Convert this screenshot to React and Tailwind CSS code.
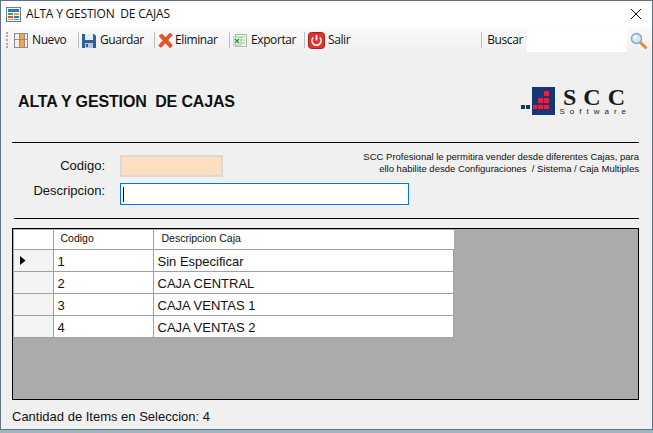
const sans = 'font-["Liberation_Sans",Arial,sans-serif]';

const NuevoIcon = () => (
  <svg width="14" height="15" viewBox="0 0 14 15">
    <rect x="0.500" y="0.500" width="13" height="14" fill="#f4f1ea" stroke="#8d8d8d" />
    <rect x="5" y="1" width="5" height="13" fill="#f5a24a" />
    <rect x="1" y="6" width="12" height="1" fill="#8d8d8d" />
    <rect x="5" y="1" width="1" height="13" fill="#8d8d8d" />
    <rect x="10" y="1" width="1" height="13" fill="#8d8d8d" />
  </svg>
);

const GuardarIcon = () => (
  <svg width="14" height="15" viewBox="0 0 14 15">
    <path d="M0 1h12l2 2v12H0z" fill="#2f5f9e" />
    <rect x="3" y="1" width="8" height="6" fill="#e8eef5" />
    <rect x="3" y="10" width="8" height="5" fill="#b9c6d6" />
    <rect x="4" y="11" width="2" height="3" fill="#2f5f9e" />
  </svg>
);

const EliminarIcon = () => (
  <svg width="15" height="15" viewBox="0 0 15 15">
    <path d="M1 3l3-2 3.500 3.500L12 0l2.500 2-4.500 5 4.500 5.500L12 15 7.500 10 3 14.500 .5 12.500 5 7.500z" fill="#e8542a" stroke="#c93f1c" strokeWidth="0.5" />
  </svg>
);

const ExportarIcon = () => (
  <svg width="14" height="15" viewBox="0 0 14 15">
    <rect x="2.500" y="1.500" width="11" height="12" fill="#eef4e8" stroke="#a3c49e" />
    <path d="M8 4h4M8 7h4M8 10h4" stroke="#a9c9a3" />
    <rect x="0" y="4" width="8" height="8" fill="#dfeed8" stroke="#86b07c" strokeWidth="0.6" />
    <path d="M2 6l4 4M6 6l-4 4" stroke="#3c8a40" strokeWidth="1.200" />
  </svg>
);

const SalirIcon = () => (
  <svg width="17" height="17" viewBox="0 0 17 17">
    <rect x="0.500" y="0.500" width="16" height="16" rx="3" fill="#e4302b" stroke="#a91f1b" />
    <path d="M5.300 5.500a4.500 4.500 0 1 0 6.400 0" fill="none" stroke="#fff" strokeWidth="1.700" />
    <path d="M8.500 3v5.500" stroke="#fff" strokeWidth="1.700" />
  </svg>
);

const AppIcon = () => (
  <svg width="15" height="15" viewBox="0 0 15 15">
    <rect x="0.500" y="0.500" width="14" height="14" fill="#fff" stroke="#6d7f95" />
    <rect x="2" y="2" width="11" height="3" fill="#2b78d0" />
    <rect x="2" y="6" width="5" height="2" fill="#3aa655" />
    <rect x="8" y="6" width="5" height="2" fill="#f0a030" />
    <rect x="2" y="9" width="5" height="2" fill="#e05040" />
    <rect x="8" y="9" width="5" height="2" fill="#2b78d0" />
    <rect x="2" y="12" width="5" height="1" fill="#f0a030" />
    <rect x="8" y="12" width="5" height="1" fill="#3aa655" />
  </svg>
);

const SearchIcon = () => (
  <svg width="17" height="17" viewBox="0 0 17 17">
    <path d="M10 10l5.500 5.500" stroke="#ee8a2c" strokeWidth="3" strokeLinecap="round" />
    <circle cx="6.500" cy="6.500" r="5" fill="#cfe6f5" stroke="#7fa8c4" strokeWidth="1.400" />
    <circle cx="5" cy="5" r="1.800" fill="#fff" />
  </svg>
);

const Logo = () => (
  <div className="flex items-start gap-[4px]">
    <svg width="34" height="28" viewBox="0 0 34 28">
      <rect x="0" y="18" width="4" height="4" fill="#14386f" />
      <rect x="5" y="18" width="4" height="4" fill="#14386f" />
      <rect x="11" y="0" width="23" height="28" fill="#14386f" />
      <rect x="23" y="4" width="5" height="5" fill="#ee1c3f" />
      <rect x="17" y="11" width="5" height="5" fill="#ee1c3f" />
      <rect x="23" y="11" width="5" height="5" fill="#ee1c3f" />
      <rect x="12" y="18" width="4" height="4" fill="#ee1c3f" />
      <rect x="17" y="18" width="5" height="4" fill="#ee1c3f" />
      <rect x="23" y="18" width="5" height="4" fill="#ee1c3f" />
    </svg>
    <div className="w-[67px] flex flex-col items-end">
      <span className='font-["Liberation_Serif",serif] font-bold text-[24px] leading-[20px] tracking-[7px] -mr-[6px] text-[#1b1b1b]'>SCC</span>
      <span className={`${sans} text-[8px] leading-[9px] tracking-[5px] -mr-[5px] text-[#222]`}>Software</span>
    </div>
  </div>
);

const tools = [
  { label: 'Nuevo', icon: <NuevoIcon />, width: 'w-[68px]', gap: 'gap-[4px]' },
  { label: 'Guardar', icon: <GuardarIcon />, width: 'w-[76px]', gap: 'gap-[4px]' },
  { label: 'Eliminar', icon: <EliminarIcon />, width: 'w-[75px]', gap: 'gap-[2px]' },
  { label: 'Exportar', icon: <ExportarIcon />, width: 'w-[75px]', gap: 'gap-[4px]' },
];

const rows = [
  ['1', 'Sin Especificar'],
  ['2', 'CAJA CENTRAL'],
  ['3', 'CAJA VENTAS 1'],
  ['4', 'CAJA VENTAS 2'],
];

export default function App() {
  return (
    <div className="w-[653px] h-[433px] overflow-hidden bg-[#9fb4bd]">
      <div className={`h-[430px] border border-[#5f7380] bg-[#f0f0f0] flex flex-col ${sans} text-[#111]`}>
        {/* title bar */}
        <div className="h-[26px] shrink-0 bg-white flex items-center pl-[5px] pr-[9px] font-['Open_Sans',sans-serif] text-[12px]">
          <AppIcon />
          <span className="ml-[5px] whitespace-pre tracking-[-0.200px]">ALTA Y GESTION  DE CAJAS</span>
          <svg width="14" height="14" viewBox="0 0 14 14" className="ml-auto">
            <path d="M2 2l10 10M12 2L2 12" stroke="#111" strokeWidth="1" />
          </svg>
        </div>

        {/* toolbar */}
        <div className="h-[26px] shrink-0 bg-gradient-to-b from-[#fafafa] to-[#f0f0f0] flex items-center pl-[5px] font-['Open_Sans',sans-serif] text-[12px] tracking-[-0.400px]">
          <div className="h-[16px] w-[2px] mr-[6px] border-l-2 border-dotted border-[#aaa]" />
          {tools.map((t) => (
            <div key={t.label} className={`${t.width} ${t.gap} flex items-center shrink-0`}>
              {t.icon}
              <span>{t.label}</span>
              <div className="ml-auto mr-[3px] w-px h-[16px] bg-[#bcbcbc]" />
            </div>
          ))}
          <div className="flex items-center gap-[3px] shrink-0">
            <SalirIcon />
            <span>Salir</span>
          </div>
          <div className="ml-[131px] w-px h-[16px] bg-[#bcbcbc]" />
          <span className="ml-[5px] w-[35px] whitespace-nowrap">Buscar</span>
          <div className="ml-[5px] w-[100px] h-[24px] bg-white" />
          <div className="ml-[3px]"><SearchIcon /></div>
        </div>

        {/* body */}
        <div className="flex-1 flex flex-col pl-[11px] pr-[13px]">
          <div className="h-[90px] shrink-0 flex items-center justify-between border-b border-black pl-[6px] pr-[13px]">
            <h1 className="font-bold text-[16px] whitespace-pre mt-[8px] tracking-[-0.150px]">ALTA Y GESTION  DE CAJAS</h1>
            <div className="mt-[8px]"><Logo /></div>
          </div>

          <div className="h-[76px] shrink-0 border-b border-black flex flex-col pt-[12px] ml-[2px]">
            <div className="flex items-start h-[22px]">
              <span className="w-[91px] h-[22px] leading-[22px] text-right text-[13px]">Codigo:</span>
              <div className="ml-[15px] w-[103px] h-[22px] bg-[#ffdfc2] border-2 border-[#d9d9d9]" />
              <div className="ml-auto -mt-[4px] text-right text-[9.500px] leading-[12px] whitespace-pre">
                <p>SCC Profesional le permitira vender desde diferentes Cajas, para</p>
                <p>ello habilite desde Configuraciones  / Sistema / Caja Multiples</p>
              </div>
            </div>
            <div className="flex items-center h-[22px] mt-[6px]">
              <span className="w-[91px] text-right text-[13px] -mt-[7px]">Descripcion:</span>
              <div className="ml-[15px] w-[289px] h-[22px] bg-white border border-[#0078d7] flex items-center pl-[2px]">
                <div className="w-px h-[15px] bg-black" />
              </div>
            </div>
          </div>

          {/* grid */}
          <div className="mt-[9px] h-[172px] shrink-0 border border-black bg-[#ababab] pl-px pt-px">
            <table className="border-collapse table-fixed w-[440px] text-[13px]">
              <thead>
                <tr className="h-[19px] bg-white text-[10.500px]">
                  <th className="w-[39px] p-0 border-r border-b border-[#a0a0a0]" />
                  <th className="w-[100px] p-0 pl-[7px] font-normal text-left border-r border-b border-[#a0a0a0]">Codigo</th>
                  <th className="p-0 pl-[8px] font-normal text-left border-b border-[#a0a0a0]">Descripcion Caja</th>
                </tr>
              </thead>
              <tbody>
                {rows.map(([code, name], i) => (
                  <tr key={code} className="h-[22px] bg-white leading-[16px]">
                    <td className="p-0 bg-[#f4f4f4] border-r border-b border-[#a0a0a0]">
                      {i === 0 && (
                        <svg width="6" height="9" viewBox="0 0 6 9" className="ml-[6px] mt-px">
                          <path d="M0 0l5.500 4.500L0 9z" fill="#000" />
                        </svg>
                      )}
                    </td>
                    <td className="p-0 pl-[4px] pt-[4px] border-r border-b border-[#a0a0a0]">{code}</td>
                    <td className="p-0 pl-[4px] pt-[4px] border-r border-b border-[#a0a0a0]">{name}</td>
                  </tr>
                ))}
              </tbody>
            </table>
          </div>

          <p className="mt-[7px] text-[13px]">Cantidad de Items en Seleccion: 4</p>
        </div>
      </div>
    </div>
  );
}
